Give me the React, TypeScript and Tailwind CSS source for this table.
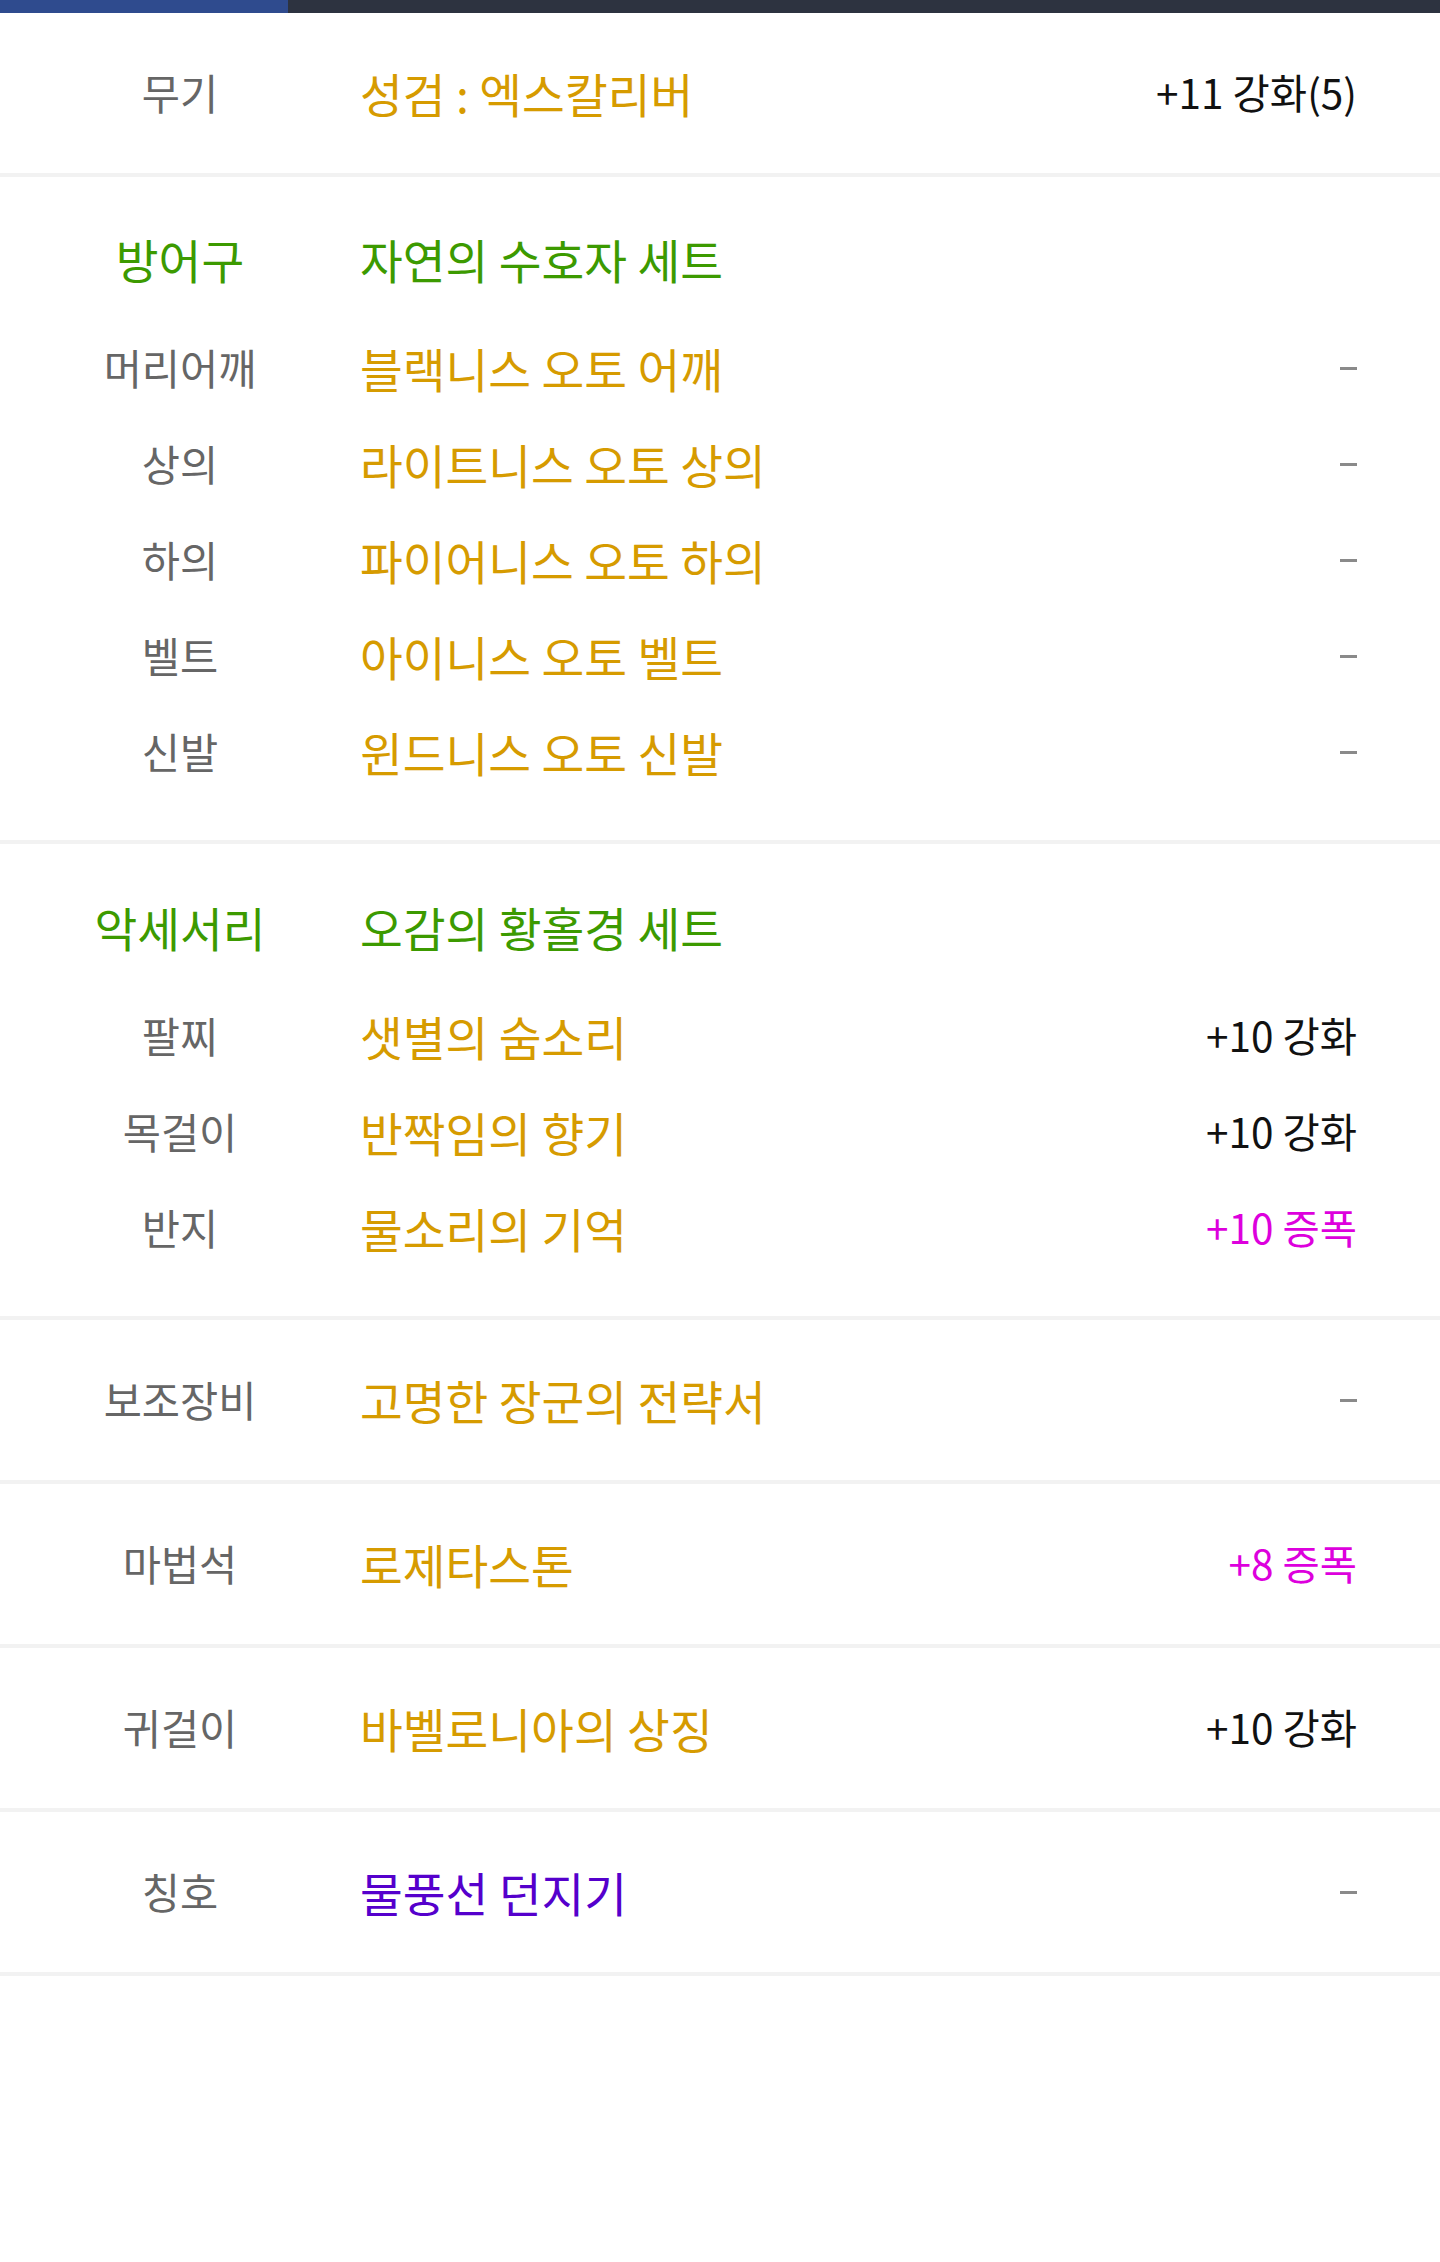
import React from "react";

type Row = { label: string; name: string; value?: string; nameColor?: string; valueColor?: string };

const FONT = { fontFamily: '"Noto Sans CJK KR", "Noto Sans", sans-serif' };

function ItemRow({ label, name, value, nameColor = "text-[#d69b00]", valueColor = "text-[#111111]", h = "h-[96px]" }: Row & { h?: string }) {
  return (
    <div className={`flex items-center ${h}`}>
      <div className="w-[360px] shrink-0 text-center text-[41.5px] text-[#666666] leading-none">{label}</div>
      <div className={`flex-1 text-[46.5px] leading-none ${nameColor}`}>{name}</div>
      <div className="pr-[83px]">
        {value ? (
          <span className={`text-[40.5px] leading-none ${valueColor}`}>{value}</span>
        ) : (
          <div className="w-[17px] h-[3px] bg-[#8a8a8a]" />
        )}
      </div>
    </div>
  );
}

function Heading({ label, name }: { label: string; name: string }) {
  return (
    <div className="flex items-center h-[96px] mb-[13px]">
      <div className="w-[360px] shrink-0 text-center text-[46.5px] text-[#3c9a00] leading-none">{label}</div>
      <div className="flex-1 text-[46.5px] leading-none text-[#3c9a00]">{name}</div>
    </div>
  );
}

function Divider() {
  return <div className="h-[4px] bg-[#f2f2f2]" />;
}

export default function App() {
  return (
    <div className="w-[1440px] min-h-[2262px] bg-white" style={FONT}>
      <div className="flex h-[13px]">
        <div className="w-[288px] bg-[#2f4b8e]" />
        <div className="flex-1 bg-[#2d3340]" />
      </div>

      <ItemRow label="무기" name="성검 : 엑스칼리버" value="+11 강화(5)" h="h-[160px]" />
      <Divider />

      <div className="pt-[34px] pb-[40px]">
        <Heading label="방어구" name="자연의 수호자 세트" />
        <ItemRow label="머리어깨" name="블랙니스 오토 어깨" />
        <ItemRow label="상의" name="라이트니스 오토 상의" />
        <ItemRow label="하의" name="파이어니스 오토 하의" />
        <ItemRow label="벨트" name="아이니스 오토 벨트" />
        <ItemRow label="신발" name="윈드니스 오토 신발" />
      </div>
      <Divider />

      <div className="pt-[35px] pb-[40px]">
        <Heading label="악세서리" name="오감의 황홀경 세트" />
        <ItemRow label="팔찌" name="샛별의 숨소리" value="+10 강화" />
        <ItemRow label="목걸이" name="반짝임의 향기" value="+10 강화" />
        <ItemRow label="반지" name="물소리의 기억" value="+10 증폭" valueColor="text-[#dd00dd]" />
      </div>
      <Divider />

      <ItemRow label="보조장비" name="고명한 장군의 전략서" h="h-[160px]" />
      <Divider />
      <ItemRow label="마법석" name="로제타스톤" value="+8 증폭" valueColor="text-[#dd00dd]" h="h-[160px]" />
      <Divider />
      <ItemRow label="귀걸이" name="바벨로니아의 상징" value="+10 강화" h="h-[160px]" />
      <Divider />
      <ItemRow label="칭호" name="물풍선 던지기" nameColor="text-[#5500cc]" h="h-[160px]" />
      <Divider />
    </div>
  );
}
